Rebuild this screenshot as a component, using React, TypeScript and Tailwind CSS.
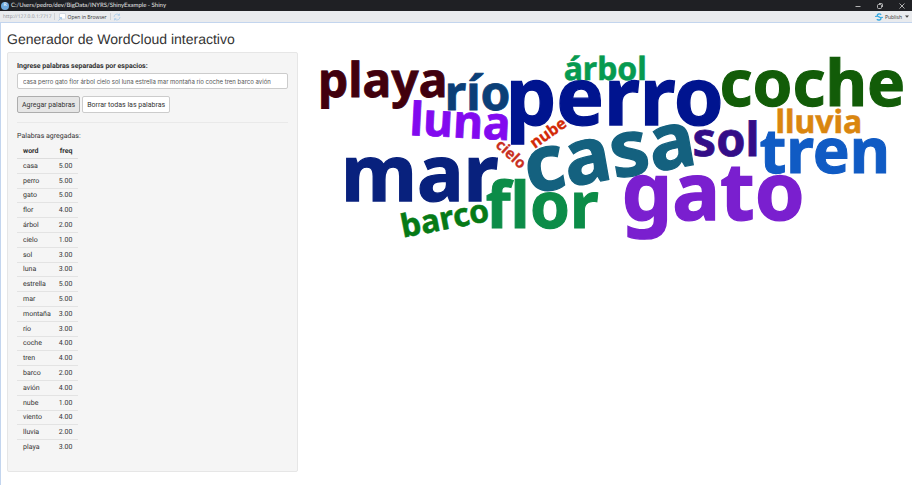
import React from "react";

type WordRow = { word: string; freq: string };

type CloudWord = {
  text: string;
  x: number;
  y: number;
  size: number;
  color: string;
  rotate?: number;
};

const rows: WordRow[] = [
  { word: "casa", freq: "5.00" },
  { word: "perro", freq: "5.00" },
  { word: "gato", freq: "5.00" },
  { word: "flor", freq: "4.00" },
  { word: "árbol", freq: "2.00" },
  { word: "cielo", freq: "1.00" },
  { word: "sol", freq: "3.00" },
  { word: "luna", freq: "3.00" },
  { word: "estrella", freq: "5.00" },
  { word: "mar", freq: "5.00" },
  { word: "montaña", freq: "3.00" },
  { word: "río", freq: "3.00" },
  { word: "coche", freq: "4.00" },
  { word: "tren", freq: "4.00" },
  { word: "barco", freq: "2.00" },
  { word: "avión", freq: "4.00" },
  { word: "nube", freq: "1.00" },
  { word: "viento", freq: "4.00" },
  { word: "lluvia", freq: "2.00" },
  { word: "playa", freq: "3.00" },
];

const cloud: CloudWord[] = [
  { text: "perro", x: 505, y: 125, size: 80, color: "#00148f" },
  { text: "casa", x: 528, y: 194, size: 78, color: "#14617f", rotate: -10 },
  { text: "gato", x: 621, y: 220, size: 80, color: "#7a1fcf" },
  { text: "mar", x: 340, y: 201, size: 78, color: "#08217d" },
  { text: "coche", x: 719, y: 106, size: 64, color: "#125c08" },
  { text: "tren", x: 759, y: 173, size: 62, color: "#105bc4" },
  { text: "flor", x: 485, y: 228, size: 64, color: "#0c8c48" },
  { text: "playa", x: 317, y: 97, size: 48, color: "#41000d" },
  { text: "río", x: 444, y: 110, size: 48, color: "#0b3f77" },
  { text: "luna", x: 408, y: 135, size: 46, color: "#820aef", rotate: 3 },
  { text: "sol", x: 692, y: 156, size: 47, color: "#330d87" },
  { text: "árbol", x: 563, y: 80, size: 32, color: "#069a50" },
  { text: "lluvia", x: 775, y: 133, size: 32, color: "#da860f" },
  { text: "barco", x: 402, y: 238, size: 32, color: "#067a16", rotate: -11 },
  { text: "nube", x: 534, y: 149, size: 16, color: "#d32a08", rotate: -35 },
  { text: "cielo", x: 494, y: 146, size: 15, color: "#c9301f", rotate: 43 },
];

function TitleBar() {
  return (
    <header className="flex h-[11px] items-center bg-[#1f2024] pr-[7px] pl-px font-[Lato,sans-serif] text-[6px] leading-[10px] text-[#e4e4e4]">
      <span className="flex size-[8px] items-center justify-center rounded-full bg-[#6fa8dc] text-[5px] leading-none text-white">
        R
      </span>
      <h1 className="ml-[2px] flex-1">
        C:/Users/pedro/dev/BigData/INYRS/ShinyExample - Shiny
      </h1>
      <div className="flex items-center gap-4">
        <button type="button" aria-label="Minimizar">
          <svg className="size-[6px]" viewBox="0 0 6 6" fill="none" stroke="#d6d6d6">
            <path d="M0.5 3.5H5.5" strokeWidth="0.8" />
          </svg>
        </button>
        <button type="button" aria-label="Restaurar">
          <svg className="size-[6px]" viewBox="0 0 6 6" fill="none" stroke="#d6d6d6" strokeWidth="0.8">
            <rect x="0.5" y="1.5" width="4" height="4" rx="1" />
            <path d="M2 0.5H4.5Q5.5 0.5 5.5 1.5V4" />
          </svg>
        </button>
        <button type="button" aria-label="Cerrar">
          <svg className="size-[6px]" viewBox="0 0 6 6" fill="none" stroke="#d6d6d6" strokeWidth="0.8">
            <path d="M0.5 0.5L5.5 5.5M5.5 0.5L0.5 5.5" />
          </svg>
        </button>
      </div>
    </header>
  );
}

function Toolbar() {
  return (
    <nav className="flex h-[12px] items-center border-b border-[#c3d5ee] bg-[#e9ebee] px-[3px] font-['Open_Sans','Noto_Sans',sans-serif] text-[5px] leading-[10px] text-[#333]">
      <span className="text-[#8d9095]">http://127.0.0.1:7717</span>
      <span className="ml-[2px] h-[7px] w-px bg-[#cfd2d6]" />
      <button type="button" className="ml-[3px] flex items-center gap-[2px]">
        <svg className="size-[8px]" viewBox="0 0 8 8" fill="none">
          <rect x="1.5" y="0.5" width="6" height="5.5" rx="0.5" fill="#fff" stroke="#c5cfda" strokeWidth="0.7" />
          <path d="M0.5 7.5L3.5 4.5M1.5 4.5H3.5V6.5" stroke="#9cc3e6" strokeWidth="0.8" />
        </svg>
        Open in Browser
      </button>
      <span className="ml-[3px] h-[7px] w-px bg-[#cfd2d6]" />
      <button type="button" aria-label="Recargar" className="ml-[2px]">
        <svg className="size-[8px]" viewBox="0 0 8 8" fill="none" stroke="#a9cbea" strokeWidth="0.8">
          <path d="M1 4a3 3 0 0 1 5.3-1.9M6.5 0.6V2.4H4.7M7 4a3 3 0 0 1-5.3 1.9M1.5 7.4V5.6H3.3" />
        </svg>
      </button>
      <button type="button" className="ml-auto flex items-center gap-[2px]">
        <svg className="size-[8px]" viewBox="0 0 8 8" fill="none" stroke="#35a8e0" strokeWidth="1.3">
          <path d="M6.2 1.7C4.8 0.4 2.2 0.9 2.2 2.5C2.2 4 6 3.8 6 5.6C6 7.2 3.2 7.5 1.8 6.2" />
          <path d="M0 3.4H2.6M5.6 4.4H8" strokeWidth="1" />
        </svg>
        Publish
      </button>
      <button type="button" aria-label="Opciones de publicación" className="ml-[3px]">
        <svg className="h-[3px] w-[4px]" viewBox="0 0 4 3">
          <path d="M0 0.5H4L2 2.8Z" fill="#444" />
        </svg>
      </button>
    </nav>
  );
}

function WordTable() {
  return (
    <table className="h-[309px] text-[7px] leading-[10px]">
      <thead>
        <tr className="border-b border-[#dddddd]">
          <th className="pt-px pr-1 pb-[2px] pl-[6px] text-left font-bold">word</th>
          <th className="pt-px pr-[6px] pb-[2px] pl-1 text-right font-bold">freq</th>
        </tr>
      </thead>
      <tbody>
        {rows.map((row) => (
          <tr key={row.word} className="border-b border-[#e3e3e3] last:border-b-0">
            <td className="py-px pr-1 pl-[6px]">{row.word}</td>
            <td className="py-px pr-[6px] pl-1 text-right">{row.freq}</td>
          </tr>
        ))}
      </tbody>
    </table>
  );
}

function Sidebar() {
  return (
    <form
      className="rounded-[2px] border border-[#e6e6e6] bg-[#f5f5f5] px-[9px] pt-2 pb-[17px]"
      onSubmit={(event) => event.preventDefault()}
    >
      <label htmlFor="words" className="block text-[7px] leading-[10px] font-bold">
        Ingrese palabras separadas por espacios:
      </label>
      <input
        id="words"
        type="text"
        defaultValue="casa perro gato flor árbol cielo sol luna estrella mar montaña río coche tren barco avión"
        className="mt-[2px] block h-4 w-full rounded-[2px] border border-[#cccccc] bg-white px-[5px] font-[Inter,sans-serif] text-[6px] leading-[10px] text-[#555555]"
      />
      <div className="mt-[7px] flex gap-[2px]">
        <button
          type="button"
          className="h-[17px] rounded-[2px] border border-[#adadad] bg-[#e6e6e6] px-1 text-[7px] leading-[10px]"
        >
          Agregar palabras
        </button>
        <button
          type="button"
          className="h-[17px] rounded-[2px] border border-[#cccccc] bg-white px-1 text-[7px] leading-[10px]"
        >
          Borrar todas las palabras
        </button>
      </div>
      <hr className="mt-[9px] border-[#e9e9e9]" />
      <p className="mt-[8px] mb-[4px] text-[7px] leading-[10px]">Palabras agregadas:</p>
      <WordTable />
    </form>
  );
}

function WordCloud() {
  return (
    <svg
      viewBox="311 52 594 200"
      className="block w-full overflow-visible font-['Noto_Sans','Open_Sans',sans-serif] font-bold"
      role="img"
      aria-label="Nube de palabras"
    >
      {cloud.map((word) => (
        <text
          key={word.text}
          fontSize={word.size}
          fill={word.color}
          stroke={word.color}
          strokeWidth={word.size / 60}
          transform={`translate(${word.x} ${word.y}) rotate(${word.rotate ?? 0})`}
        >
          {word.text}
        </text>
      ))}
    </svg>
  );
}

export default function App() {
  return (
    <div className="flex min-h-screen flex-col bg-white font-[Roboto,'Liberation_Sans',sans-serif] text-[#333333] [text-rendering:geometricPrecision]">
      <TitleBar />
      <Toolbar />
      <main className="flex-1 border-l border-[#c3d5ee] pt-[8px] pb-2">
        <h2 className="mb-[4px] px-[6px] font-['Liberation_Sans',Arial,sans-serif] text-[14px] leading-[17px]">
          Generador de WordCloud interactivo
        </h2>
        <div className="flex items-start">
          <section className="w-1/3 pr-[7px] pl-[6px]">
            <Sidebar />
          </section>
          <section className="w-2/3 px-[7px]">
            <WordCloud />
          </section>
        </div>
      </main>
    </div>
  );
}
